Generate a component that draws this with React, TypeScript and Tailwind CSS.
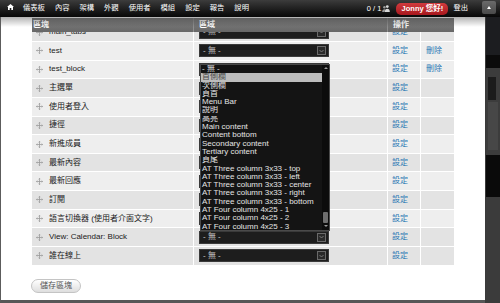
import React from 'react';

type Row = { name: string; dark?: boolean; del?: boolean; open?: boolean };

const ROWS: Row[] = [
  { name: 'main_tabs', dark: true },
  { name: 'test', del: true },
  { name: 'test_block', del: true, open: true },
  { name: '主選單', dark: true },
  { name: '使用者登入' },
  { name: '捷徑', dark: true },
  { name: '新進成員' },
  { name: '最新內容', dark: true },
  { name: '最新回應' },
  { name: '訂閱', dark: true },
  { name: '語言切換器 (使用者介面文字)' },
  { name: 'View: Calendar: Block', dark: true },
  { name: '誰在線上', dark: true },
];

const OPTIONS = [
  '- 無 -',
  '首側欄',
  '次側欄',
  '頁首',
  'Menu Bar',
  '說明',
  '高亮',
  'Main content',
  'Content bottom',
  'Secondary content',
  'Tertiary content',
  '頁尾',
  'AT Three column 3x33 - top',
  'AT Three column 3x33 - left',
  'AT Three column 3x33 - center',
  'AT Three column 3x33 - right',
  'AT Three column 3x33 - bottom',
  'AT Four column 4x25 - 1',
  'AT Four column 4x25 - 2',
  'AT Four column 4x25 - 3',
];

const NAV = ['儀表板', '內容', '架構', '外觀', '使用者', '模組', '設定', '報告', '說明'];

function Handle() {
  return (
    <svg width="7" height="7" viewBox="0 0 7 7" className="ml-[4px] shrink-0" fill="none" stroke="#9a9a9a" strokeWidth="0.8">
      <path d="M3.5 0.3v6.4M0.3 3.5h6.4" />
      <path d="M2.6 1.2l0.9-0.9 0.9 0.9M2.6 5.8l0.9 0.9 0.9-0.9M1.2 2.6l-0.9 0.9 0.9 0.9M5.8 2.6l0.9 0.9-0.9 0.9" />
    </svg>
  );
}

function Dropdown() {
  return (
    <div className="absolute left-0 top-0 z-10 flex h-[167px] w-[130px] border border-[#4a4a4a] bg-[#141414]">
      <div className="flex-1">
        {OPTIONS.map((o, i) => (
          <div
            key={o}
            className={`h-[8.3px] overflow-hidden whitespace-nowrap pl-[1px] leading-[8.3px] ${
              i === 1 ? 'bg-[#bdbdbd] text-[#4a4a4a]' : 'text-[#e4e4e4]'
            }`}
          >
            {o}
          </div>
        ))}
      </div>
      <div className="flex w-[7px] flex-col bg-[#0c0c0c]">
        <div className="flex h-[7px] items-center justify-center">
          <div className="h-0 w-0 border-x-[2px] border-b-[2px] border-x-transparent border-b-[#9a9a9a]" />
        </div>
        <div className="flex-1" />
        <div className="mx-[1px] h-[11px] rounded-[1px] bg-[#6e6e6e]" />
        <div className="flex h-[7px] items-center justify-center">
          <div className="h-0 w-0 border-x-[2px] border-t-[2px] border-x-transparent border-t-[#9a9a9a]" />
        </div>
      </div>
    </div>
  );
}

function Select({ open }: { open?: boolean }) {
  return (
    <div className="relative flex h-[13px] w-[130px] items-center border border-[#3a3a3a] bg-[#1d1d1d] pl-[3px] pr-[2px]">
      <span className="flex-1 text-[#cfcfcf]">- 無 -</span>
      <div className="flex h-[9px] w-[9px] items-center justify-center border border-[#6a6a6a] bg-[#2a2a2a]">
        <svg width="5" height="4" viewBox="0 0 5 4" fill="none" stroke="#8a8a8a" strokeWidth="0.8">
          <path d="M0.5 1l2 2 2-2" />
        </svg>
      </div>
      {open && <Dropdown />}
    </div>
  );
}

function TableRow({ row }: { row: Row }) {
  return (
    <div className={`flex h-[18.65px] border-b border-white ${row.dark ? 'bg-[#e3e3e3]' : 'bg-[#eeeeee]'}`}>
      <div className="flex w-[162px] items-center border-r border-white">
        <Handle />
        <span className="ml-[6px] whitespace-nowrap text-[#1a1a1a]">{row.name}</span>
      </div>
      <div className="flex w-[194px] items-center border-r border-white pl-[5px]">
        <Select open={row.open} />
      </div>
      <div className="flex w-[33px] items-center border-r border-white pl-[4px] text-[#2b78b4]">設定</div>
      <div className="flex w-[33px] items-center pl-[5px] text-[#2b78b4]">{row.del ? '刪除' : ''}</div>
    </div>
  );
}

export default function App() {
  return (
    <div className="relative h-[303px] w-[500px] overflow-hidden bg-white font-['Liberation_Sans','Noto_Sans_CJK_TC',sans-serif] text-[8px]">
      {/* toolbar */}
      <div className="flex h-[17px] items-center bg-gradient-to-b from-[#3c3c3c] to-[#080808] text-[7.3px] text-white">
        <svg width="7" height="6" viewBox="0 0 7 6" className="ml-[7px] mb-[3px]" fill="#ffffff">
          <path d="M3.5 0L7 3H6v3H4.3V4H2.7v2H1V3H0z" />
        </svg>
        <div className="ml-[9px] flex gap-[10px]">
          {NAV.map((n) => (
            <span key={n}>{n}</span>
          ))}
        </div>
        <div className="flex-1" />
        <span className="text-[7.5px]">0 / 1</span>
        <svg width="8" height="7" viewBox="0 0 8 7" className="ml-[1px]" fill="#d8d8d8">
          <circle cx="5.3" cy="1.6" r="1.4" />
          <path d="M2.8 7c0-2 1-3.2 2.5-3.2S7.8 5 7.8 7z" />
          <circle cx="2.4" cy="2.2" r="1.2" fill="#9a9a9a" />
          <path d="M0.2 7c0-1.8 0.9-2.8 2.2-2.8 0.5 0 0.9 0.1 1.2 0.4C3 5.2 2.7 6 2.7 7z" fill="#9a9a9a" />
        </svg>
        <div className="ml-[6px] flex h-[12px] w-[52px] items-center justify-center rounded-[5px] bg-gradient-to-b from-[#d23a3e] to-[#a8171d] text-[7.5px] font-bold">
          Jonny 您好!
        </div>
        <span className="ml-[5px]">登出</span>
        <div className="ml-[14px] mr-[4px] mb-[2px] flex h-[13px] w-[14px] items-center justify-center rounded-[2px] bg-gradient-to-b from-[#6a6a6a] to-[#4a4a4a]">
          <div className="h-0 w-0 border-x-[2px] border-b-[3px] border-x-transparent border-b-white" />
        </div>
      </div>

      <div className="flex h-[286px]">
        {/* page body */}
        <div className="relative flex w-[485px] flex-col border-b-[3px] border-l border-b-[#575757] border-l-[#5c5c5c]">
          <div className="pointer-events-none absolute inset-x-0 top-0 z-20 h-[10px] bg-gradient-to-b from-black/30 to-transparent" />
          <div className="ml-[31px] mt-[1px] w-[422px]">
            <div className="flex h-[14px] bg-gradient-to-b from-[#828282] to-[#676767] font-bold text-white">
              <div className="flex w-[162px] items-center border-r border-[#8e8e8e] pl-[1px]">區塊</div>
              <div className="flex w-[194px] items-center border-r border-[#8e8e8e] pl-[5px]">區域</div>
              <div className="flex w-[66px] items-center pl-[5px]">操作</div>
            </div>
            <div className="h-[10px] overflow-hidden">
              <div className="mt-[-8.65px]">
                <TableRow row={ROWS[0]} />
              </div>
            </div>
            {ROWS.slice(1).map((r) => (
              <TableRow key={r.name} row={r} />
            ))}
          </div>
          <div className="ml-[30px] mt-[13px] flex h-[14px] w-[50px] items-center justify-center rounded-full border border-[#c4c4c4] bg-gradient-to-b from-white to-[#dedede] text-[#555]">
            儲存區塊
          </div>
        </div>

        {/* dark side strip */}
        <div className="flex w-[15px] flex-col border-l border-[#3a3a3a]">
          <div className="h-[38px] bg-[#1c1d20]" />
          <div className="h-[13px] bg-[#0b0b0b]" />
          <div className="flex h-[87px] flex-col bg-[#3c3c3c] px-[2px] pt-[9px]">
            <div className="h-[23px] w-[8px] bg-[#1c1c1c]" />
            <div className="mt-[2px] h-[48px] w-[10px] bg-[#474747]" />
          </div>
          <div className="h-[42px] bg-[#0a0a0a]" />
          <div className="flex-1 bg-[#3b3b3b]" />
        </div>
      </div>
    </div>
  );
}
